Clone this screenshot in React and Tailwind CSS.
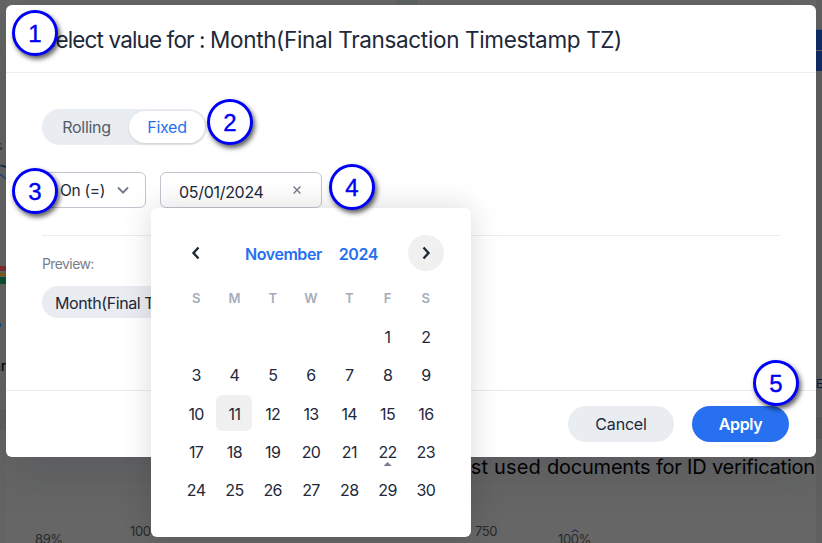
import React from "react";

const weekdays = ["S", "M", "T", "W", "T", "F", "S"];
const days = [null, null, null, null, null, ...Array.from({ length: 30 }, (_, i) => i + 1)];

function Step({ n, className }) {
  return (
    <div
      className={`absolute z-30 flex size-[46px] items-center justify-center rounded-full border-[3px] border-[#0000fa] bg-white pt-0.5 font-['Liberation_Sans',Arial,sans-serif] text-[24px] leading-none text-[#0000f0] shadow-[2px_3px_5px_rgba(0,0,0,0.65)] [-webkit-text-stroke:0.4px_#0000f0] ${className}`}
    >
      {n}
    </div>
  );
}

function Chevron({ d, className }) {
  return (
    <svg viewBox="0 0 14 14" className={className} fill="none" stroke="currentColor">
      <path d={d} />
    </svg>
  );
}

function Dashboard() {
  return (
    <div className="flex h-full justify-between overflow-hidden bg-[#666]">
      <div className="flex w-1.5 shrink-0 flex-col overflow-hidden bg-[#646464]">
        <div className="mt-[141px] flex h-3 justify-end pr-[3px] text-[9px] leading-3 text-[#222]">%</div>
        <svg viewBox="0 0 6 18" className="mt-3 h-[18px] w-1.5 shrink-0" fill="none">
          <path d="M0 0 6 2" stroke="#172a50" strokeWidth="2" />
          <path d="M0 9 6 14" stroke="#20467c" strokeWidth="1.4" />
        </svg>
        <div className="mt-[83px] h-[5px] shrink-0 bg-[#7c2d2b]" />
        <div className="mt-0.5 h-[3px] shrink-0 bg-[#7a600c]" />
        <div className="mt-px h-[7px] shrink-0 bg-[#08512f]" />
        <div className="mt-[39px] h-1 w-px shrink-0 bg-[#164a7c]" />
        <div className="mt-[31px] flex h-4 shrink-0 justify-end text-[13px] font-medium leading-4 text-black">
          ar
        </div>
        <div className="mt-[36px] h-5 shrink-0 border-t border-[#5b5b5b] bg-[#5f5f5f]" />
      </div>
      <div className="flex min-w-0 flex-1 flex-col">
        <div className="flex h-[457px] shrink-0 justify-center">
          <div className="mr-[9px] w-5 border-x border-[#5a5f5e] bg-[#5d6261]" />
        </div>
        <div className="flex justify-end">
          <h2 className="mr-px mt-[-2px] whitespace-nowrap text-[20px] leading-6 tracking-[-0.2px] text-black">
            <span className="tracking-[0.2px]">Most used </span>documents for ID verification
          </h2>
        </div>
        <div className="mt-11 flex items-start whitespace-nowrap text-[13px] leading-4 tracking-[-0.4px] text-[#292929]">
          <span className="ml-[29px] mt-2 w-[95px]">89%</span>
          <span className="w-[345px]">100%</span>
          <span className="w-[83px]">750</span>
          <span className="relative mt-2">
            100%
            <Chevron d="M1 9 7 5 13 9" className="absolute left-[13px] top-[-4px] size-2 stroke-2 text-[#122a52]" />
          </span>
        </div>
      </div>
      <div className="flex w-1.5 shrink-0 flex-col overflow-hidden bg-[#606060]">
        <div className="mt-[29px] h-[21px] shrink-0 border-t border-[#415875] bg-[#102d66]" />
        <div className="mt-px h-5 shrink-0 bg-[#102d66]" />
        <div className="mt-[305px] h-4 shrink-0 text-[12px] leading-4 text-[#0a1c3c]">E</div>
        <div className="mt-[26px] h-5 shrink-0 border-y border-[#555] bg-[#5c5c5c]" />
      </div>
    </div>
  );
}

function Calendar() {
  return (
    <div className="absolute left-[-9px] top-9 z-20 h-[329px] w-80 rounded-md bg-white px-[26px] pt-[27px] text-[#20283a] shadow-[0_0_30px_rgba(0,0,0,0.15)]">
      <div className="flex h-9 items-center justify-between">
        <button className="flex size-9 items-center justify-center">
          <Chevron d="M9.5 1.5 4.5 7 9.5 12.5" className="ml-0.5 size-3.5 stroke-[2.4]" />
        </button>
        <div className="ml-0.5 flex gap-[17px] pt-0.5 text-[16px] font-semibold tracking-[-0.45px] text-[#2770ef]">
          <span>November</span>
          <span>2024</span>
        </div>
        <button className="mr-px flex size-9 items-center justify-center rounded-full bg-[#f0f0f0]">
          <Chevron d="M4.5 1.5 9.5 7 4.5 12.5" className="size-3.5 stroke-[2.4]" />
        </button>
      </div>
      <div className="mt-[18px] grid grid-cols-7 text-center text-[13px] font-semibold leading-[18px] text-[#a5acba]">
        {weekdays.map((d, i) => (
          <span key={i}>{d}</span>
        ))}
      </div>
      <div className="mt-2.5 grid auto-rows-[38.25px] grid-cols-7 text-[16px] tracking-[-0.6px]">
        {days.map((d, i) => (
          <div key={i} className="flex items-center justify-center">
            <span
              className={`relative flex size-9 items-center justify-center rounded-md pt-0.5 ${d === 11 ? "bg-[#f0f0f0]" : ""}`}
            >
              {d}
              {d === 22 && (
                <span className="absolute bottom-[3px] h-1 w-2 bg-[#777e8b] [clip-path:polygon(50%_0,100%_100%,0_100%)]" />
              )}
            </span>
          </div>
        ))}
      </div>
    </div>
  );
}

function Dialog() {
  return (
    <div className="absolute left-1.5 top-[5px] flex h-[452px] w-[810px] flex-col rounded-md bg-white text-[#20283a] shadow-[0_16px_50px_rgba(20,30,40,0.14)]">
      <header className="flex h-[68px] shrink-0 items-center border-b border-[#e9ecf1] px-9 pt-[3px]">
        <h1 className="whitespace-nowrap text-[22.5px] leading-8 tracking-[-0.35px]">
          <span className="tracking-[-0.88px]">Select value for : </span>Month(Final Transaction Timestamp TZ)
        </h1>
      </header>
      <main className="flex flex-1 flex-col px-9 pt-9">
        <div className="flex h-9 w-[165px] shrink-0 items-center rounded-full bg-[#e9ecf1] p-0.5 text-[16px] tracking-[-0.3px]">
          <span className="flex-1 text-center text-[#555c69]">Rolling</span>
          <span className="flex h-8 w-[76px] items-center justify-center rounded-full bg-white text-[#2770ef] shadow-sm">
            Fixed
          </span>
        </div>
        <div className="mt-[27px] flex shrink-0 gap-3.5">
          <div className="flex h-9 w-[104px] items-center justify-between rounded-md border border-[#c0c6cf] pl-[17px] pr-[15px] text-[15.5px]">
            <span className="whitespace-nowrap pt-px tracking-[-0.3px]">On (=)</span>
            <Chevron d="M2 4.5 7 9.5 12 4.5" className="size-3.5 stroke-2 text-[#777e8b]" />
          </div>
          <div className="relative">
            <div className="flex h-9 w-[162px] items-center justify-between rounded-md border border-[#c0c6cf] pl-[18px] pr-[18px] text-[16px]">
              <span className="pt-[3px] tracking-[-0.3px]">05/01/2024</span>
              <Chevron d="M3 3 11 11M11 3 3 11" className="size-3 stroke-[1.7] text-[#777e8b]" />
            </div>
            <Calendar />
          </div>
        </div>
        <div className="mt-[27px] border-t border-[#e9ecf1]" />
        <p className="mt-[18px] text-[14px] leading-5 tracking-[-0.6px] text-[#777e8b]">Preview:</p>
        <div className="mt-3 flex h-8 w-[400px] shrink-0 items-center whitespace-nowrap rounded-full bg-[#e9ecf1] px-[13px] pt-0.5 text-[16px] tracking-[-0.4px]">
          Month(Final T
        </div>
      </main>
      <footer className="flex h-[67px] shrink-0 items-start justify-end gap-[18px] border-t border-[#e9ecf1] pr-[27px] pt-[15px] text-[16px]">
        <button className="h-9 w-[106px] rounded-full bg-[#e9ecf1] tracking-[-0.2px]">Cancel</button>
        <button className="h-9 w-[97px] rounded-full bg-[#2770ef] font-semibold tracking-[-0.4px] text-white">Apply</button>
      </footer>
    </div>
  );
}

export default function App() {
  return (
    <div className="relative h-[543px] w-[822px] overflow-hidden font-['Inter','Liberation_Sans',Arial,sans-serif]">
      <Dashboard />
      <Dialog />
      <Step n={1} className="left-3 top-2.5" />
      <Step n={2} className="left-[207px] top-[99px]" />
      <Step n={3} className="left-3 top-[168px]" />
      <Step n={4} className="left-[329px] top-[164px]" />
      <Step n={5} className="left-[753px] top-[360px]" />
    </div>
  );
}
